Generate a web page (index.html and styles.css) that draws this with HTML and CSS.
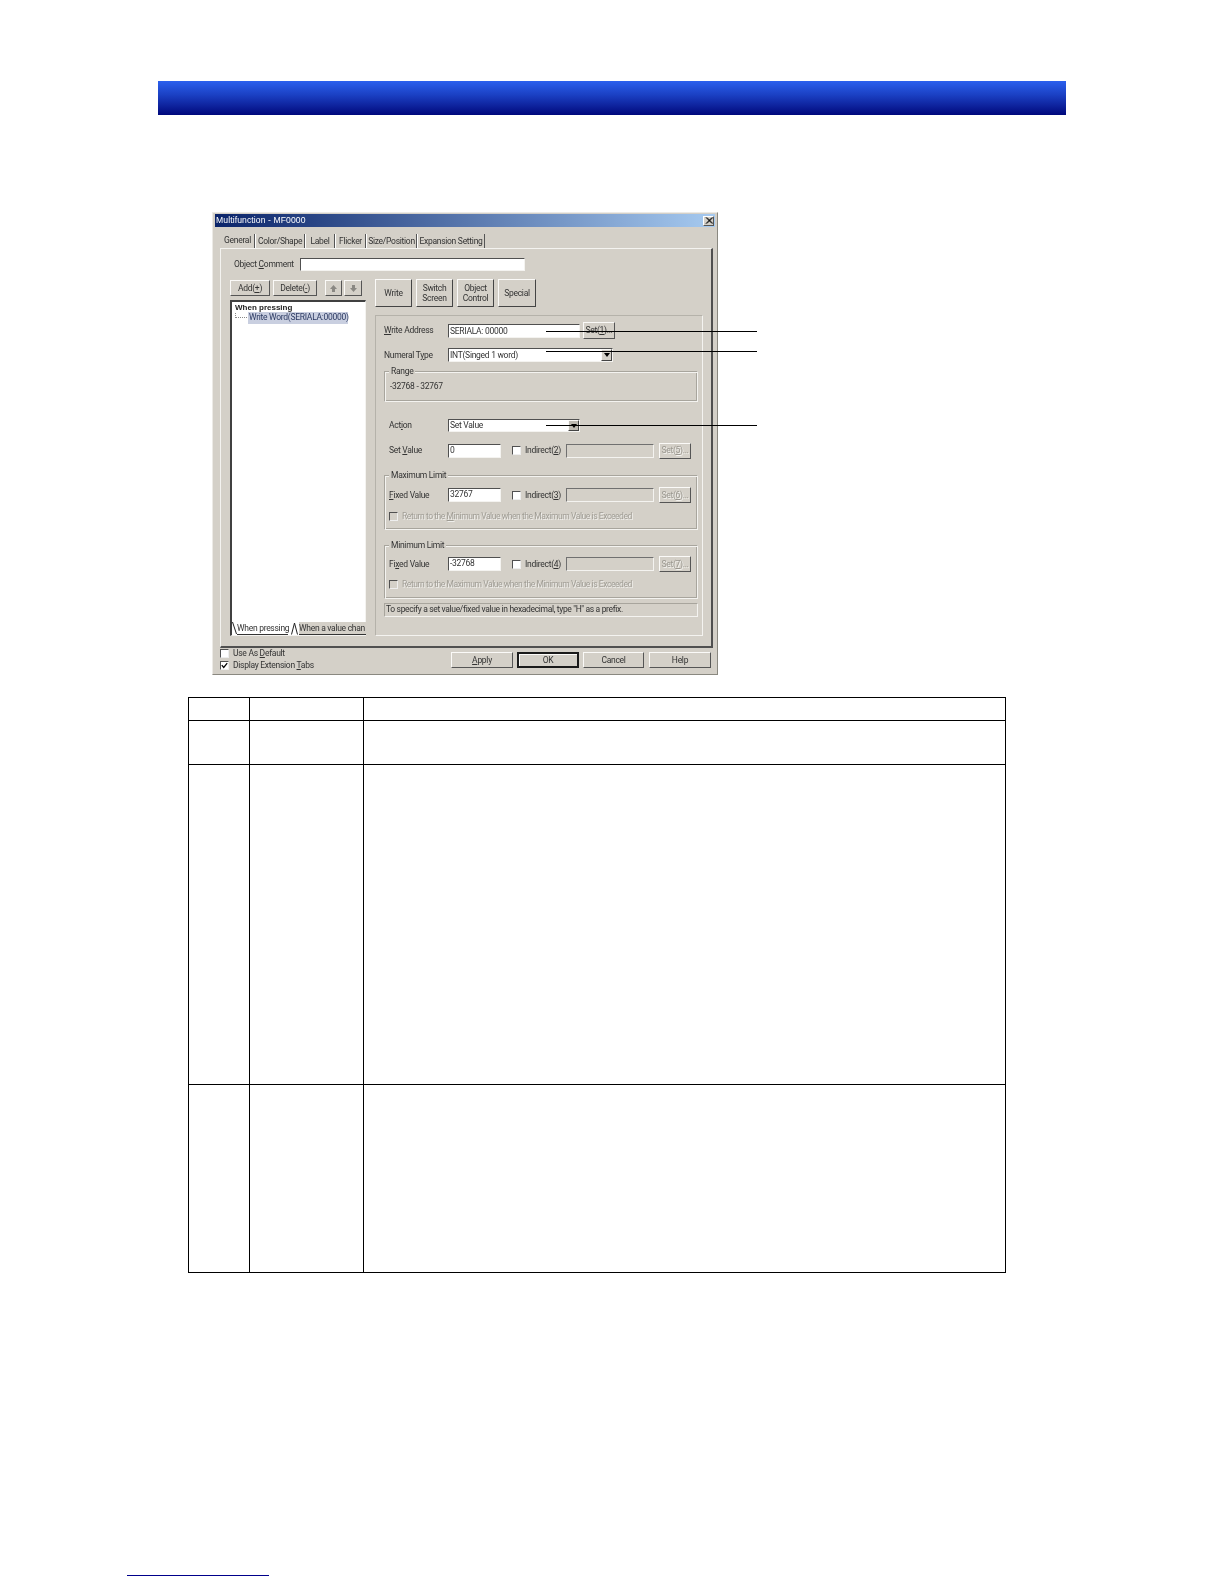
FILE: index.html
```html
<!DOCTYPE html>
<html lang="en">
<head>
<meta charset="utf-8">
<title>Multifunction object settings</title>
<link rel="stylesheet" href="styles.css">
</head>
<body>
<div class="banner"></div>

<div class="figure">
  <div class="dialog">
    <div class="titlebar">
      <span>Multifunction - MF0000</span>
      <span class="close-btn"><svg viewBox="0 0 9 8" width="8" height="7"><path d="M1 0.5 L8 7.5 M2 0.5 L9 7.5 M8 0.5 L1 7.5 M9 0.5 L2 7.5" stroke="#000" stroke-width="1" fill="none"/></svg></span>
    </div>

    <div class="tabstrip">
      <span class="tab tab-general">General</span>
      <span class="tab tab-color">Color/Shape</span>
      <span class="tab tab-label">Label</span>
      <span class="tab tab-flicker">Flicker</span>
      <span class="tab tab-size">Size/Position</span>
      <span class="tab tab-exp">Expansion Setting</span>
    </div>

    <div class="tabpanel">
      <div class="comment-row">
        <span class="comment-label">Object <u>C</u>omment</span>
        <span class="input comment-input"></span>
      </div>

      <div class="split">
        <div class="left-col">
          <div class="tools">
            <span class="btn btn-add">Add(<u>+</u>)</span>
            <span class="btn btn-del">Delete(<u>-</u>)</span>
            <span class="btn btn-up"><svg viewBox="0 0 9 9" width="9" height="9"><path d="M4.5 1 L8 5 H6 V8 H3 V5 H1 Z" fill="#8a8883"/></svg></span>
            <span class="btn btn-down"><svg viewBox="0 0 9 9" width="9" height="9"><path d="M4.5 8 L8 4 H6 V1 H3 V4 H1 Z" fill="#8a8883"/></svg></span>
          </div>
          <div class="listbox">
            <div class="tree-root">When pressing</div>
            <div class="tree-child">
              <span class="tree-dots"></span>
              <span class="tree-selected">Write Word(SERIALA:00000)</span>
            </div>
            <div class="list-tabs">
              <svg class="slant" viewBox="0 0 5 13" width="5" height="13"><path d="M0.5 0 L4.5 12" stroke="#222" fill="none"/></svg>
              <span class="list-tab list-tab-on">When pressing</span>
              <svg class="slant slant-mid" viewBox="0 0 7 13" width="7" height="13"><path d="M0.5 12.5 L3.5 1 L6.5 12.5" stroke="#222" fill="none"/></svg>
              <span class="list-tab list-tab-off">When a value chan</span>
            </div>
          </div>
        </div>

        <div class="right-col">
          <div class="action-buttons">
            <span class="btn big big-37">Write</span>
            <span class="btn big big-37">Switch<br>Screen</span>
            <span class="btn big big-37">Object<br>Control</span>
            <span class="btn big big-38">Special</span>
          </div>

          <div class="settings">
            <div class="row row-address">
              <span class="lbl lbl-a"><u>W</u>rite Address</span>
              <span class="input w132 low">SERIALA: 00000</span>
              <span class="btn set set-tall">Set(<u>1</u>)...</span>
            </div>
            <div class="row row-type">
              <span class="lbl lbl-a">Numeral T<u>y</u>pe</span>
              <span class="input w165 combo low">INT(Singed 1 word)<span class="drop"><i class="tri"></i></span></span>
            </div>

            <div class="group group-range">
              <div class="legend">Range</div>
              <div class="range-text">-32768 - 32767</div>
            </div>

            <div class="row row-action">
              <span class="lbl lbl-b">Act<u>i</u>on</span>
              <span class="input w132 h13 combo">Set Value<span class="drop drop-soft"><i class="tri"></i></span></span>
            </div>
            <div class="row row-setvalue">
              <span class="lbl lbl-b">Set <u>V</u>alue</span>
              <span class="input w53">0</span>
              <span class="check"></span>
              <span class="indirect">Indirect(<u>2</u>)</span>
              <span class="field"></span>
              <span class="btn set set-off">Set(<u>5</u>)...</span>
            </div>

            <div class="group group-max">
              <div class="legend">Maximum Limit</div>
              <div class="row row-fixed">
                <span class="lbl lbl-c"><u>F</u>ixed Value</span>
                <span class="input w53">32767</span>
                <span class="check"></span>
                <span class="indirect">Indirect(<u>3</u>)</span>
                <span class="field"></span>
                <span class="btn set set-off">Set(<u>6</u>)...</span>
              </div>
              <div class="return-row">
                <span class="check check-off"></span>
                <span class="return-text">Return to the <u>M</u>inimum Value when the Maximum Value is Exceeded</span>
              </div>
            </div>

            <div class="group group-min">
              <div class="legend">Minimum Limit</div>
              <div class="row row-fixed-min">
                <span class="lbl lbl-c">Fi<u>x</u>ed Value</span>
                <span class="input w53">-32768</span>
                <span class="check"></span>
                <span class="indirect">Indirect(<u>4</u>)</span>
                <span class="field"></span>
                <span class="btn set set-off">Set(<u>7</u>)...</span>
              </div>
              <div class="return-row return-row-min">
                <span class="check check-off"></span>
                <span class="return-text">Return to the Maximum Value when the Minimum Value is Exceeded</span>
              </div>
            </div>

            <div class="hint">To specify a set value/fixed value in hexadecimal, type "H" as a prefix.</div>
          </div>
        </div>
      </div>
    </div>

    <div class="dialog-footer">
      <div class="footer-checks">
        <div class="footer-check"><span class="check"></span><span>Use As <u>D</u>efault</span></div>
        <div class="footer-check"><span class="check"><svg viewBox="0 0 9 9" width="7" height="7"><path d="M1 4 L3.5 7 L8 1.5" stroke="#000" stroke-width="1.6" fill="none"/></svg></span><span>Display Extension <u>T</u>abs</span></div>
      </div>
      <div class="footer-buttons">
        <span class="btn foot foot-apply"><u>A</u>pply</span>
        <span class="btn foot foot-ok">OK</span>
        <span class="btn foot foot-cancel">Cancel</span>
        <span class="btn foot foot-help">Help</span>
      </div>
    </div>
  </div>

  <span class="callout callout-1"></span>
  <span class="callout callout-2"></span>
  <span class="callout callout-3"></span>
</div>

<table class="spec">
  <colgroup><col class="c1"><col class="c2"><col class="c3"></colgroup>
  <tr class="r1"><td></td><td></td><td></td></tr>
  <tr class="r2"><td></td><td></td><td></td></tr>
  <tr class="r3"><td></td><td></td><td></td></tr>
  <tr class="r4"><td></td><td></td><td></td></tr>
</table>

<div class="footer-rule"></div>
</body>
</html>
```

FILE: styles.css
```css
* { box-sizing: border-box; }
html, body { margin: 0; padding: 0; background: #fff; }
body { width: 1224px; height: 1584px; overflow: hidden; font-family: "Liberation Sans", Arial, sans-serif; color: #333; }
u { text-underline-offset: 1px; }

.banner {
  width: 908px; height: 34px; margin: 81px 0 0 158px;
  background: linear-gradient(180deg, #2b60ee 0%, #1b41c4 40%, #0f25a0 70%, #00087c 100%);
}

.figure { position: relative; width: 506px; height: 463px; margin: 97px 0 0 212px; }

.dialog {
  width: 506px; height: 463px; padding: 1px 2px 0;
  background: #d4d0c8;
  border: 1px solid; border-color: #eceae6 #8a8880 #8a8880 #eceae6;
  font-family: Roboto, "Liberation Sans", Arial, sans-serif;
  font-size: 8.5px; line-height: 11px; letter-spacing: -0.28px;
  filter: blur(0.35px);
}

.titlebar {
  height: 13px; display: flex; align-items: center; justify-content: space-between;
  padding: 0 1px 0 1px;
  background: linear-gradient(90deg, #0a246a 0%, #a6caf0 100%);
  color: #fff;
  font-family: "Liberation Sans", Arial, sans-serif; font-size: 8.6px; letter-spacing: 0.1px;
}
.close-btn {
  width: 11px; height: 10px; display: flex; align-items: center; justify-content: center;
  background: #d4d0c8; border: 1px solid; border-color: #fff #555 #555 #fff;
}

.tabstrip { height: 14px; margin-top: 7px; padding-left: 6px; display: flex; align-items: flex-end; }
.tab {
  height: 14px; display: flex; align-items: center; justify-content: center; white-space: nowrap;
  border-right: 1px solid #555; border-left: 1px solid #fff;
}
.tab-general { width: 34px; border-left: 0; padding-bottom: 2px; }
.tab-color { width: 50px; }
.tab-label { width: 30px; }
.tab-flicker { width: 31px; }
.tab-size { width: 51px; }
.tab-exp { width: 68px; }

.tabpanel {
  width: 493px; height: 400px; margin-left: 5px; padding: 9px 8px 0 9px;
  border: 1px solid; border-color: #f4f3f0 #505050 #505050 #f4f3f0;
  border-width: 1px 2px 2px 1px;
}

.comment-row { display: flex; align-items: center; height: 13px; }
.comment-label { width: 66px; margin-left: 4px; white-space: nowrap; }
.input {
  display: block; height: 14px; padding: 0 1px; background: #fff; white-space: nowrap; position: relative; flex: none;
  border: 1px solid; border-color: #505050 #f4f3f0 #f4f3f0 #505050;
  line-height: 11px;
}
.low { line-height: 13px; }
.comment-input { width: 225px; height: 13px; }

.split { display: grid; grid-template-columns: 136px 1fr; column-gap: 9px; height: 357px; margin-top: 8px; }
.left-col { display: flex; flex-direction: column; min-height: 0; }
.tools { display: flex; height: 16px; margin-top: 1px; }
.btn {
  display: flex; align-items: center; justify-content: center; text-align: center; white-space: nowrap;
  background: #d4d0c8; border: 1px solid; border-color: #fbfaf8 #555 #555 #fbfaf8;
}
.btn-add { width: 40px; }
.btn-del { width: 44px; margin-left: 3px; }
.btn-up { width: 17px; margin-left: 8px; }
.btn-down { width: 18px; margin-left: 2px; }

.listbox {
  flex: 1; margin-top: 4px; display: flex; flex-direction: column; background: #fff; padding: 0 0 0 3px; min-height: 0;
  border: 1px solid; border-color: #404040 #f4f3f0 #f4f3f0 #404040; border-width: 2px 1px 1px 2px;
}
.tree-root { font-family: "Liberation Sans", Arial, sans-serif; font-size: 8px; font-weight: 700; letter-spacing: 0; height: 11px; color: #222; }
.tree-child { display: flex; align-items: center; height: 12px; margin-top: -1px; }
.tree-dots { width: 12px; height: 5px; margin-top: -5px; border-left: 1px dotted #888; border-bottom: 1px dotted #888; }
.tree-selected { width: 100px; height: 12px; margin-left: 1px; padding: 0 1px; background: #c9cfe0; color: #2c3a62; white-space: nowrap; }
.list-tabs { display: flex; align-items: flex-end; height: 14px; margin-top: auto; margin-left: -3px; white-space: nowrap; }
.slant { flex: none; }
.slant-mid { margin-left: 3px; }
.list-tab { height: 13px; line-height: 13px; flex: none; }
.list-tab-on { width: 51px; border-bottom: 1px solid #333; }
.list-tab-off { width: 67px; margin-left: 1px; background: #d4d0c8; border-bottom: 1px solid #333; }

.action-buttons { display: flex; gap: 4px; height: 28px; }
.big { height: 28px; line-height: 10px; border-color: #fbfaf8 #444 #444 #fbfaf8; }
.big-37 { width: 37px; }
.big-38 { width: 38px; }

.settings {
  width: 328px; height: 321px; margin-top: 8px; padding: 6px 0 0 8px;
  border: 1px solid; border-color: #b5b2aa #f4f3f0 #f4f3f0 #b5b2aa;
}
.row { display: flex; align-items: center; height: 16px; }
.row-address { height: 17px; }
.row-type { height: 14px; margin-top: 9px; }
.row-action { height: 13px; margin-top: 17px; }
.row-setvalue { height: 17px; margin-top: 10px; }
.row-fixed { margin-top: 6px; }
.row-fixed-min { margin-top: 5px; }
.lbl { white-space: nowrap; flex: none; }
.lbl-a { width: 64px; }
.lbl-b { width: 59px; margin-left: 5px; }
.lbl-c { width: 59px; margin-left: 4px; }
.w132 { width: 132px; }
.w165 { width: 165px; }
.h13 { height: 13px; }
.w53 { width: 53px; }

.set { width: 32px; height: 16px; flex: none; margin-left: 5px; }
.set-tall { height: 17px; margin-left: 3px; }
.set-off { color: #9a978f; text-shadow: 1px 1px 0 #f4f3f0; }

.combo { padding-right: 14px; }
.drop {
  position: absolute; top: 0; right: 0; width: 11px; height: 100%;
  display: flex; align-items: center; justify-content: center;
  background: #d4d0c8; border: 1px solid; border-color: #fbfaf8 #444 #444 #fbfaf8;
}
.drop-soft { background: #bdbab2; }
.tri { display: block; width: 0; height: 0; border-left: 3px solid transparent; border-right: 3px solid transparent; border-top: 4px solid #000; }

.check {
  display: flex; align-items: center; justify-content: center; flex: none; width: 9px; height: 9px; background: #fff;
  border: 1px solid; border-color: #505050 #eee #eee #505050;
}
.check-off { background: #d4d0c8; }
.row .check { margin-left: 11px; }
.indirect { width: 33px; margin-left: 4px; white-space: nowrap; flex: none; }
.field {
  width: 88px; height: 14px; margin-left: 8px; flex: none;
  border: 1px solid; border-color: #707070 #f4f3f0 #f4f3f0 #707070;
}

.group {
  width: 314px;
  border: 1px solid; border-color: #a8a59d #f4f3f0 #f4f3f0 #a8a59d;
  box-shadow: inset 1px 1px 0 #f4f3f0, inset -1px -1px 0 #a8a59d;
}
.legend { width: fit-content; height: 11px; margin: -6px 0 0 4px; padding: 0 2px; background: #d4d0c8; }
.group-range { height: 31px; margin-top: 9px; }
.range-text { margin-top: 4px; padding-left: 5px; }
.group-max { height: 55px; margin-top: 16px; }
.group-min { height: 54px; margin-top: 15px; }

.return-row { display: flex; align-items: center; height: 11px; margin: 8px 0 0 4px; color: #a09d95; white-space: nowrap; letter-spacing: -0.43px; }
.return-row-min { margin-top: 7px; }
.return-text { margin-left: 4px; text-shadow: 1px 1px 0 #f0efec; }

.hint {
  width: 314px; height: 14px; margin-top: 4px; padding: 0 1px; white-space: nowrap; letter-spacing: -0.34px;
  border: 1px solid; border-color: #a8a59d #f4f3f0 #f4f3f0 #a8a59d;
}

.dialog-footer { display: flex; justify-content: space-between; height: 24px; }
.footer-checks { padding-left: 5px; }
.footer-check { display: flex; align-items: center; height: 11px; margin-bottom: 1px; white-space: nowrap; }
.footer-check .check { margin-right: 4px; }
.footer-buttons { display: flex; height: 16px; margin: 4px 4px 0 0; }
.foot { height: 16px; }
.foot-apply { width: 62px; }
.foot-ok { width: 62px; margin-left: 4px; border: 2px solid #1a1a1a; box-shadow: inset 1px 1px 0 #fbfaf8; }
.foot-cancel { width: 61px; margin-left: 4px; }
.foot-help { width: 62px; margin-left: 5px; }

.callout { position: absolute; left: 334px; width: 211px; height: 1px; background: #000; }
.callout-1 { top: 119px; }
.callout-2 { top: 139px; }
.callout-3 { top: 213px; }

.spec { width: 818px; height: 575px; margin: 22px 0 0 188px; border-collapse: collapse; table-layout: fixed; }
.spec td { border: 1px solid #000; padding: 0; }
.c1 { width: 61px; }
.c2 { width: 114px; }
.r1 { height: 23px; }
.r2 { height: 44px; }
.r3 { height: 320px; }
.r4 { height: 188px; }

.footer-rule { width: 142px; height: 1px; margin: 302px 0 0 127px; background: #00008b; }
```
